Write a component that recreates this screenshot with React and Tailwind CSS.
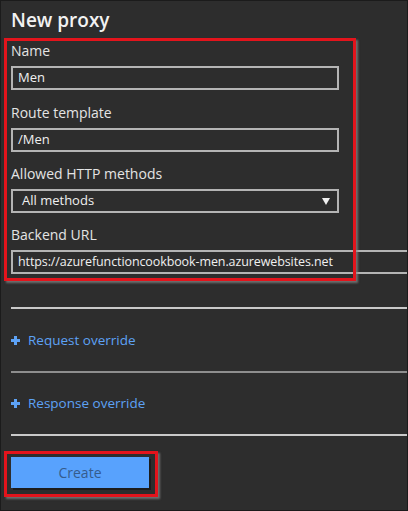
import React from "react";

const fields = [
  { label: "Name", value: "Men", mt: "mt-[8px]" },
  { label: "Route template", value: "/Men", mt: "mt-[13px]" },
];

function Plus() {
  return (
    <svg width="9" height="9" viewBox="0 0 9 9" className="shrink-0">
      <rect x="3" y="0" width="3" height="9" fill="#5da2f5" />
      <rect x="0" y="3" width="9" height="3" fill="#5da2f5" />
    </svg>
  );
}

export default function App() {
  return (
    <div
      className="relative w-[408px] h-[511px] overflow-hidden bg-[#2d2d2d] border border-[#1b1b1b] pl-[10px] text-[#e4e4e4]"
      style={{ fontFamily: '"Open Sans", "Noto Sans", sans-serif' }}
    >
      <h1 className="pt-[6px] text-[19px] leading-[26px] font-semibold text-[#f2f2f2]">
        New proxy
      </h1>

      {/* form */}
      <div className="flex flex-col">
        {fields.map((f) => (
          <div key={f.label} className="flex flex-col">
            <label className={`${f.mt} mb-[5px] text-[14px] leading-5`}>{f.label}</label>
            <div className="w-[328px] h-[24px] border-2 border-[#b4b4b4] flex items-center px-[5px] text-[13px] text-[#f0f0f0]">
              {f.value}
            </div>
          </div>
        ))}

        <label className="mt-[12px] mb-[5px] text-[14px] leading-5">Allowed HTTP methods</label>
        <div className="w-[328px] h-[24px] border-2 border-[#b4b4b4] flex items-center justify-between pl-[9px] pr-[7px] text-[13px] text-[#f0f0f0]">
          <span>All methods</span>
          <svg width="8" height="7" viewBox="0 0 8 7">
            <path d="M0 0 H8 L4 7 Z" fill="#f0f0f0" />
          </svg>
        </div>

        <label className="mt-[12px] mb-[5px] text-[14px] leading-5">Backend URL</label>
        <div className="w-[410px] h-[24px] border-2 border-[#b4b4b4] flex items-center px-[5px] text-[12.5px] tracking-[-0.1px] text-[#f0f0f0] whitespace-nowrap">
          https://azurefunctioncookbook-men.azurewebsites.net
        </div>
      </div>

      {/* overrides */}
      <div className="mt-[33px] h-[2px] bg-[#c9c9c9]" />
      <div className="h-[62px] flex items-center gap-[8px] text-[13.5px] text-[#5da2f5]">
        <Plus />
        <span>Request override</span>
      </div>
      <div className="h-[2px] bg-[#8e8e8e]" />
      <div className="h-[61px] flex items-center gap-[8px] text-[13.5px] text-[#5da2f5]">
        <Plus />
        <span>Response override</span>
      </div>
      <div className="h-[2px] bg-[#c9c9c9]" />

      <button className="mt-[21px] w-[138px] h-[31px] bg-[#58a2fd] text-[14px] text-[#355c8c] shadow-[2px_2px_0_#1c1c1c]">
        Create
      </button>

      {/* red annotation boxes */}
      <div className="pointer-events-none absolute left-[3px] top-[37px] w-[352px] h-[243px] border-[3px] border-[#e3141c] shadow-[2px_2px_2px_rgba(140,140,140,0.7)]" />
      <div className="pointer-events-none absolute left-[3px] top-[450px] w-[154px] h-[46px] border-[3px] border-[#e3141c] shadow-[2px_2px_2px_rgba(140,140,140,0.7)]" />
    </div>
  );
}
